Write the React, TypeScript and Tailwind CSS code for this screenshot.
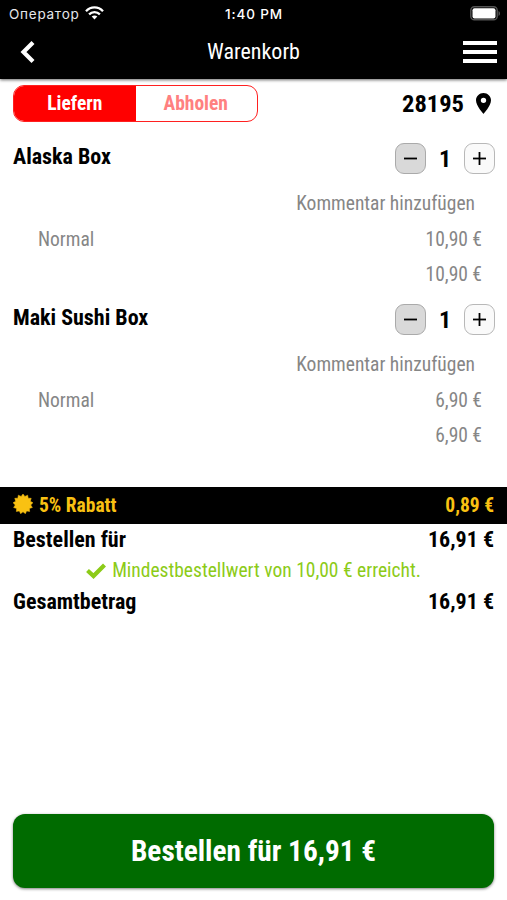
import { clsx } from "clsx"

type CartItem = {
  name: string
  count: number
  variant: string
  price: string
  total: string
}

const items: CartItem[] = [
  { name: "Alaska Box", count: 1, variant: "Normal", price: "10,90 €", total: "10,90 €" },
  { name: "Maki Sushi Box", count: 1, variant: "Normal", price: "6,90 €", total: "6,90 €" },
]

function StatusBar() {
  return (
    <div className="grid h-7 grid-cols-3 items-center pl-[9px] pr-[6px] font-['Inter','Noto_Sans',sans-serif] text-[13.5px]">
      <div className="flex items-center gap-[5px]">
        <span className="w-[71px] tracking-[0.75px] text-gray-200">Оператор</span>
        <svg className="-mt-[2px]" width="19" height="14" viewBox="0 0 19 14" fill="none" stroke="white" strokeWidth="2.3">
          <path d="M1 5.2C5.8.2 13.2.2 18 5.2" />
          <path d="M4.1 8.4c3-3.1 7.8-3.1 10.8 0" />
          <path d="M9.5 13.4 6.7 10.6c1.6-1.5 4-1.5 5.6 0Z" fill="white" stroke="none" />
        </svg>
      </div>
      <span className="-ml-[2px] text-center font-medium tracking-[0.9px]">1:40 PM</span>
      <svg className="-mt-px justify-self-end" width="31" height="15" viewBox="0 0 31 15">
        <rect x="0.8" y="0.8" width="26.4" height="13" rx="3.6" fill="none" stroke="#555" strokeWidth="1.4" />
        <rect x="2.5" y="2.2" width="23" height="10.2" rx="2" fill="white" />
        <path d="M28.5 5v5c2-.8 2-4.2 0-5Z" fill="#555" />
      </svg>
    </div>
  )
}

function Header() {
  return (
    <header className="h-[79px] bg-black text-white shadow-[0_1px_3px_rgba(0,0,0,0.6)]">
      <StatusBar />
      <div className="flex h-[47px] items-center justify-between pl-5 pr-[10px]">
        <svg width="15" height="22" viewBox="0 0 15 22" fill="none" stroke="white" strokeWidth="4.2">
          <path d="M13 1.5 3.5 11 13 20.5" />
        </svg>
        <h1 className="mr-[10px] ml-[19px] text-center text-[22px]">Warenkorb</h1>
        <div className="flex w-[34px] flex-col gap-[5px]">
          <span className="h-1 bg-white" />
          <span className="h-1 bg-white" />
          <span className="h-1 bg-white" />
        </div>
      </div>
    </header>
  )
}

function DeliveryBar() {
  return (
    <div className="mt-[6px] flex h-[37px] items-center justify-between pl-[13px] pr-[16px]">
      <div className="grid h-[37px] w-[245px] grid-cols-2 overflow-hidden rounded-[11px] border border-[#ff2020] text-[19.5px] font-bold">
        <button className="bg-[#ff0000] text-white">Liefern</button>
        <button className="pr-px text-[#ff8080]">Abholen</button>
      </div>
      <div className="flex items-center gap-3 pt-px text-[24.5px] font-bold">
        28195
        <svg className="-mt-[2px]" width="15" height="21" viewBox="5 2 14 20" preserveAspectRatio="none">
          <path d="M12 2C8.13 2 5 5.13 5 9c0 5.25 7 13 7 13s7-7.75 7-13c0-3.87-3.13-7-7-7zm0 9.5a2.5 2.5 0 1 1 0-5 2.5 2.5 0 0 1 0 5z" />
        </svg>
      </div>
    </div>
  )
}

function StepButton({ plus }: { plus?: boolean }) {
  return (
    <button
      className={clsx(
        "grid size-[31px] place-items-center rounded-[9px] border",
        plus ? "border-[#b8b8b8] bg-[#fafafa]" : "border-[#aaa] bg-[#d9d9d9]"
      )}
    >
      <svg width="13" height="13" viewBox="0 0 13 13" stroke="black" strokeWidth="1.8">
        <path d="M0 6.5h13" />
        {plus && <path d="M6.5 0v13" />}
      </svg>
    </button>
  )
}

function CartRow({ item }: { item: CartItem }) {
  return (
    <li className="h-[161.3px] pl-[13px] pr-3 text-[19.5px] text-[#868686]">
      <div className="flex h-[46px] items-start justify-between text-black">
        <h2 className="pt-1 text-[22px] leading-[26px] font-bold">{item.name}</h2>
        <div className="flex items-center pt-[3px]">
          <StepButton />
          <span className="w-[38px] pt-px text-center text-2xl leading-[30px] font-bold">{item.count}</span>
          <StepButton plus />
        </div>
      </div>
      <p className="h-[35px] pr-5 text-right leading-[35px]">Kommentar hinzufügen</p>
      <div className="flex h-[35px] justify-between pr-[13px] pl-[25px] leading-[37px]">
        <span>{item.variant}</span>
        <span>{item.price}</span>
      </div>
      <p className="pr-[13px] text-right leading-[37px]">{item.total}</p>
    </li>
  )
}

function DiscountBar() {
  // thirteen-toothed badge
  const points = Array.from({ length: 26 }, (_, i) => {
    const r = i % 2 ? 7.8 : 10
    const a = (i * Math.PI) / 13
    return `${10 + r * Math.sin(a)},${10 - r * Math.cos(a)}`
  }).join(" ")

  return (
    <div className="flex h-[37px] items-center justify-between bg-black px-[13px] text-[19.5px] font-bold text-[#f9c112]">
      <div className="flex items-center gap-[6px]">
        <svg width="20" height="20" viewBox="0 0 20 20" fill="currentColor" className="-mt-[3px]">
          <polygon points={points} stroke="currentColor" strokeWidth="0.5" />
        </svg>
        5% Rabatt
      </div>
      <span>0,89 €</span>
    </div>
  )
}

function SumRow({ label, value }: { label: string; value: string }) {
  return (
    <div className="flex h-[31px] items-center justify-between px-[13px] text-[22px] font-bold">
      <span>{label}</span>
      <span>{value}</span>
    </div>
  )
}

export default function App() {
  return (
    <div className="flex h-[900px] w-[507px] flex-col bg-white font-['Roboto_Condensed','Roboto',sans-serif] font-stretch-75% text-black">
      <Header />
      <DeliveryBar />
      <ul className="mt-[18.2px] h-[346.8px]">
        {items.map((item) => (
          <CartRow key={item.name} item={item} />
        ))}
      </ul>
      <DiscountBar />
      <SumRow label="Bestellen für" value="16,91 €" />
      <div className="flex h-[31px] items-center justify-center gap-[6px] pt-px text-[19.5px] text-[#8ccb18]">
        <svg width="20" height="16" viewBox="0 0 20 16" fill="none" stroke="currentColor" strokeWidth="4.2">
          <path d="m1.5 7.5 6 5.5L18.5 2" />
        </svg>
        Mindestbestellwert von 10,00 € erreicht.
      </div>
      <SumRow label="Gesamtbetrag" value="16,91 €" />
      <button className="mx-[13px] mt-auto mb-3 h-[74px] rounded-xl bg-[#006b00] pt-[2px] text-[29.3px] font-bold text-white shadow-[0_1px_3px_rgba(0,0,0,0.5)]">
        Bestellen für 16,91 €
      </button>
    </div>
  )
}
